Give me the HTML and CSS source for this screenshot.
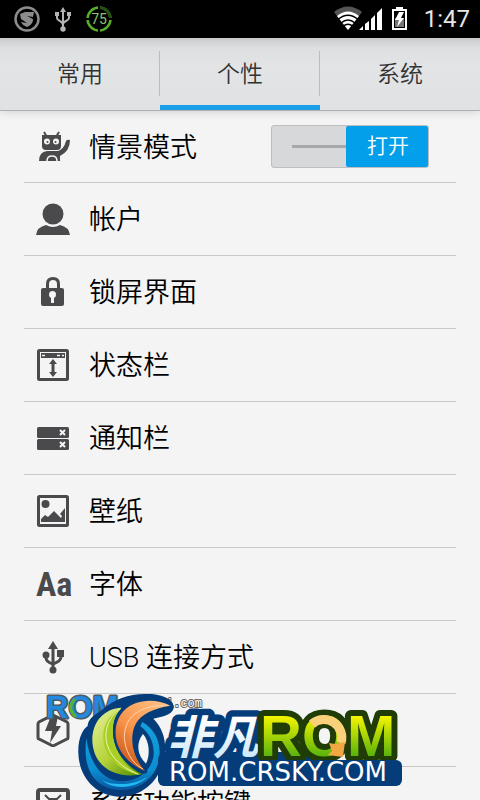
FILE: index.html
```html
<!DOCTYPE html>
<html lang="zh-CN">
<head>
    <meta charset="UTF-8">
    <meta name="viewport" content="width=device-width, initial-scale=1.0">
    <title>个性</title>
    <link rel="stylesheet" href="styles.css">
</head>
<body>
    <div class="app">
        <div class="status-bar">
            <div class="status-left">
                <svg width="26" height="26" viewBox="0 0 26 26">
                    <circle cx="13" cy="13" r="11.5" fill="none" stroke="#8c8c8c" stroke-width="2.5"/>
                    <path d="M6 8l5-2h9l-1 5-6-1 6 3c0 4-2 6-6 8-3-1-5-3-6-5l6 1-6-4z" fill="#8c8c8c"/>
                </svg>
                <svg width="16" height="26" viewBox="0 0 16 26" fill="none" stroke="#b4b4b4" stroke-width="2">
                    <path d="M8 4v18M2 8v4c0 3 6 3 6 7M14 8v4c0 3-6 3-6 6"/>
                    <path d="M5 6l3-5 3 5zM0 6h4v4H0zM12 6h4v4h-4z" fill="#b4b4b4" stroke="none"/>
                    <circle cx="8" cy="23" r="2.7" fill="#b4b4b4" stroke="none"/>
                </svg>
                <svg width="26" height="26" viewBox="0 0 26 26">
                    <circle cx="13" cy="13" r="11.5" fill="none" stroke="#58ad2b" stroke-width="2.5"/>
                    <path d="M13 1.500A11.500 11.500 0 0 1 24.500 13" fill="none" stroke="#254d17" stroke-width="2.500"/>
                    <path d="M13 0v3M13 23v3M0 13h3M23 13h3" stroke="#000" stroke-width="2"/>
                    <text x="13" y="18" class="gauge">75</text>
                </svg>
            </div>
            <div class="status-right">
                <svg width="76" height="26" viewBox="0 0 76 26">
                    <path d="M14 24L0 6Q14-5 28 6z" fill="#555"/>
                    <path d="M14 24L3 10Q14 1 25 10z" fill="#fff"/>
                    <path d="M4 13.500Q14 5 24 13.500M7 17Q14 11 21 17M9 20.500Q14 16 19 20.500" fill="none" stroke="#000" stroke-width="1.500"/>
                    <path d="M25 24h4v-4l-4 4zM31 18l4-3v9h-4zM37 13l4-4v15h-4zM43 7l5-5v22h-5z" fill="#fff"/>
                    <path d="M58 3h4V1h7v2h4v21H58z" fill="#fff"/>
                    <path d="M60 5h11v17H60z" fill="#000"/>
                    <path d="M61 12h9v9h-9z" fill="#777"/>
                    <path d="M65 6h5l-3 6h3l-7 9 2-7h-4z" fill="#fff"/>
                </svg>
                <time class="clock">1:47</time>
            </div>
        </div>

        <nav class="tabs">
            <a href="#common" class="tab">常用</a>
            <a href="#personal" class="tab active">个性</a>
            <a href="#system" class="tab">系统</a>
        </nav>

        <ul class="settings">
            <li class="row">
                <svg class="icon" viewBox="0 0 34 34">
                    <path d="M8 2l3 5M23 2l-3 5" stroke="#4a4a4c" stroke-width="2"/>
                    <path d="M6 5h19v11q0 4-4 4H10q-4 0-4-4z"/>
                    <circle cx="11" cy="11.500" r="3" class="cut"/>
                    <circle cx="20" cy="11.500" r="3" class="cut"/>
                    <circle cx="11.500" cy="12" r="1"/>
                    <circle cx="19.500" cy="12" r="1"/>
                    <path d="M3 31q0-9 8-10h11q6-2 8-10 1-2 4-1 0 11-10 16v5z"/>
                    <path d="M11 31q0-5 5-5t5 5" fill="none" stroke="#f4f4f4" stroke-width="1.500"/>
                </svg>
                <label class="name" for="scene">情景模式</label>
                <label class="switch">
                    <input type="checkbox" id="scene" checked>
                    <span class="thumb">打开</span>
                </label>
            </li>
            <li class="row">
                <svg class="icon" viewBox="0 0 34 34">
                    <circle cx="17" cy="12" r="10.500"/>
                    <path d="M0 33q1-8 10-10 7 4 14 0 9 2 10 10z"/>
                </svg>
                <a href="#account" class="name">帐户</a>
            </li>
            <li class="row">
                <svg class="icon" viewBox="0 0 34 34">
                    <path d="M11.500 14V9q0-5.500 5.500-5.500T22.500 9v5" fill="none" stroke="#4a4a4c" stroke-width="3"/>
                    <rect x="5" y="13" width="23" height="18" rx="2"/>
                    <circle cx="16.500" cy="19.500" r="3.500" class="cut"/>
                    <path d="M15 20h3v8h-3z" class="cut"/>
                </svg>
                <a href="#lock" class="name">锁屏界面</a>
            </li>
            <li class="row">
                <svg class="icon" viewBox="0 0 34 34">
                    <rect x="2.500" y="2.500" width="29" height="29" rx="1" fill="none" stroke="#4a4a4c" stroke-width="3"/>
                    <path d="M5 5h24v5H5z"/>
                    <path d="M6 7.500h3M21 7.500h3M26 7.500h2" stroke="#f4f4f4" stroke-width="1.500"/>
                    <path d="M17 11l4 5h-2.500v8H21l-4 5-4-5h2.500v-8H13z"/>
                </svg>
                <a href="#statusbar" class="name">状态栏</a>
            </li>
            <li class="row">
                <svg class="icon" viewBox="0 0 34 34">
                    <rect x="1" y="6" width="32" height="11" rx="1.500"/>
                    <rect x="1" y="18" width="32" height="11" rx="1.500"/>
                    <path d="M24 9l5 5m0-5l-5 5M24 21l5 5m0-5l-5 5" stroke="#f4f4f4" stroke-width="2"/>
                </svg>
                <a href="#notify" class="name">通知栏</a>
            </li>
            <li class="row">
                <svg class="icon" viewBox="0 0 34 34">
                    <rect x="2.500" y="2.500" width="29" height="29" rx="1" fill="none" stroke="#4a4a4c" stroke-width="3"/>
                    <circle cx="9.500" cy="10" r="4"/>
                    <path d="M5 28v-3l4-4 3 2 6-6 7 7 1-2-2-2 5-6v14z"/>
                </svg>
                <a href="#wallpaper" class="name">壁纸</a>
            </li>
            <li class="row">
                <span class="icon icon-font">Aa</span>
                <a href="#font" class="name">字体</a>
            </li>
            <li class="row">
                <svg class="icon" viewBox="0 0 34 34">
                    <path d="M17 6v22M10 16v2q0 4 7 6M25 14v3q0 4-8 7" fill="none" stroke="#4a4a4c" stroke-width="3"/>
                    <path d="M12 9l5-8 5 8zM21 10h7v7h-7z"/>
                    <circle cx="10" cy="15" r="3.500"/>
                    <circle cx="17" cy="30" r="3.500"/>
                </svg>
                <a href="#usb" class="name">USB 连接方式</a>
            </li>
            <li class="row">
                <svg class="icon" viewBox="0 0 34 34">
                    <path d="M17 2l14 7q1 1 1 2v13q0 2-1 2l-14 7-14-7q-1 0-1-2V11q0-1 1-2z" fill="none" stroke="#4a4a4c" stroke-width="3"/>
                    <path d="M15 3h7l-2 10h5L14 30l2-12H9z"/>
                </svg>
                <a href="#performance" class="name">性能</a>
            </li>
            <li class="row">
                <svg class="icon" viewBox="0 0 34 34">
                    <rect x="2" y="4" width="30" height="27" rx="2" fill="none" stroke="#4a4a4c" stroke-width="4"/>
                    <path d="M9 9l4 4h8l4-4" fill="none" stroke="#4a4a4c" stroke-width="2"/>
                </svg>
                <a href="#keys" class="name">系统功能按键</a>
            </li>
        </ul>

        <!-- site logo over the list -->
        <svg class="watermark" width="370" height="112" viewBox="40 688 370 112">
            <defs>
                <linearGradient id="lime" x1="0" y1="0" x2="0" y2="1">
                    <stop offset="0.2" stop-color="#f5f500"/>
                    <stop offset="0.8" stop-color="#5db40c"/>
                </linearGradient>
                <linearGradient id="ice" x1="0" y1="0" x2="0" y2="1">
                    <stop offset="0.3" stop-color="#fff"/>
                    <stop offset="1" stop-color="#bfe2f8"/>
                </linearGradient>
                <linearGradient id="orange" x1="1" y1="0" x2="0.4" y2="1">
                    <stop offset="0" stop-color="#ffc58a"/>
                    <stop offset="0.6" stop-color="#f7934a"/>
                    <stop offset="1" stop-color="#cf5a1c"/>
                </linearGradient>
                <linearGradient id="green" x1="0" y1="0" x2="0.8" y2="1">
                    <stop offset="0" stop-color="#e8f2a0"/>
                    <stop offset="0.6" stop-color="#b4d238"/>
                    <stop offset="1" stop-color="#5e9608"/>
                </linearGradient>
                <linearGradient id="cyan" x1="0" y1="0" x2="0" y2="1">
                    <stop offset="0" stop-color="#14a0dc"/>
                    <stop offset="0.7" stop-color="#0a8fd0"/>
                    <stop offset="1" stop-color="#0a55a0"/>
                </linearGradient>
            </defs>

            <text x="46" y="718" class="rom-small">ROM</text>
            <path d="M75 699q-9 9 1 18" fill="none" stroke="#54b52c" stroke-width="3"/>
            <text x="202" y="707" class="dot-com">i.com</text>

            <g transform="translate(75 690) scale(0.3333)">
                <path d="M78 62C120 25 165 10 220 12 270 13 300 32 296 55 290 78 258 80 235 86 270 120 280 175 262 225 245 280 195 322 130 320 60 316 12 260 10 190 8 145 25 115 38 108 38 90 55 75 78 62z" fill="#053d7b"/>
                <path d="M34 145C20 250 70 303 145 300 210 296 255 245 254 185 253 145 235 115 202 96L196 108C225 130 238 160 236 195 230 240 195 270 145 274 85 275 45 225 34 145z" fill="url(#cyan)"/>
                <path d="M80 270C115 300 180 298 218 260 185 282 120 292 80 270z" fill="#22baf0"/>
                <path d="M140 53C90 55 52 92 52 150 53 220 108 270 203 253 140 222 105 165 115 100 119 80 128 66 140 53z" fill="url(#green)"/>
                <path d="M136 57C95 80 80 115 86 155 92 203 135 245 192 253 135 220 105 165 115 100 119 80 126 68 136 57z" fill="#a9cf24"/>
                <path d="M136 57C72 100 70 205 190 253" fill="none" stroke="#edf3b4" stroke-width="3"/>
                <path d="M286 47C240 24 180 27 145 64 105 110 110 200 210 243 175 205 160 145 182 102 198 72 238 54 286 47z" fill="url(#orange)" stroke="#053d7b" stroke-width="14" stroke-linejoin="round" paint-order="stroke"/>
                <path d="M280 46C200 45 150 74 148 140 149 180 170 220 204 237" fill="none" stroke="#ffd3a5" stroke-width="3"/>
                <path d="M204 132C182 160 186 195 213 221 226 195 224 155 204 132z" fill="#f4f4f4"/>
            </g>

            <rect x="158" y="752" width="160" height="34" rx="8" fill="#053d7b"/>
            <text x="167" y="754" class="feifan">非凡</text>
            <text x="260" y="756" class="rom-big">ROM</text>
            <path d="M312 724A18 18 0 0 1 341 743" fill="none" stroke="#fbd07a" stroke-width="9"/>
            <path d="M345 742l-2 15-15-2 4-4-3-8 6 1z" fill="#f2a842"/>
            <rect x="158" y="760" width="244" height="26" rx="6" fill="#053d7b"/>
            <text x="169" y="781" class="site">ROM.CRSKY.COM</text>
        </svg>
    </div>
</body>
</html>
```

FILE: styles.css
```css
* {
    box-sizing: border-box;
}

body {
    margin: 0;
    background: #f4f4f4;
    color: #000;
    font-family: Roboto, "Noto Sans CJK SC", sans-serif;
}

a {
    color: inherit;
    text-decoration: none;
}

.app {
    position: relative;
    display: flex;
    flex-direction: column;
    height: 100vh;
    overflow: hidden;
}

/* status bar */
.status-bar {
    flex: none;
    display: flex;
    justify-content: space-between;
    align-items: center;
    height: 38px;
    padding: 0 10px 0 14px;
    background: #000;
}

.status-left,
.status-right {
    display: flex;
    align-items: center;
}

.status-left {
    gap: 15px;
}

.status-right {
    gap: 14px;
}

.gauge {
    fill: #8cc46c;
    font-size: 14px;
    text-anchor: middle;
}

.clock {
    color: #e6e6e6;
    font-size: 24px;
    line-height: 38px;
}

/* tabs */
.tabs {
    flex: none;
    display: flex;
    height: 73px;
    border-bottom: 1px solid #b0b0b1;
    background: linear-gradient(#c9cacc, #dedfe1 10px, #e3e4e6 30px, #e0e1e3);
    box-shadow: 0 2px 8px rgba(0, 0, 0, 0.12);
}

.tab {
    position: relative;
    flex: 1;
    color: #333;
    font-size: 23px;
    font-weight: 350;
    line-height: 73px;
    height: 72px;
    text-align: center;
    border-bottom: 5px solid transparent;
}

.tab.active {
    border-bottom-color: #1b9fe8;
}

.tab:not(:last-child)::after {
    content: "";
    position: absolute;
    top: 13px;
    right: 0;
    width: 1px;
    height: 45px;
    background: #bcbdbf;
}

/* list */
.settings {
    flex: 1;
    min-height: 0;
    overflow-y: auto;
    scrollbar-width: none;
    margin: 0;
    padding: 0 24px;
    list-style: none;
}

.row {
    display: flex;
    align-items: center;
    height: 73px;
    padding: 0 27px 0 12px;
    border-bottom: 1px solid #c8c8c8;
}

.row:first-child {
    height: 72px;
}

.icon {
    flex: none;
    width: 34px;
    height: 34px;
    margin-right: 19px;
    fill: #4a4a4c;
}

.icon .cut {
    fill: #f4f4f4;
}

.icon-font {
    color: #4a4a4c;
    font: bold 34px/34px "Liberation Sans Narrow", "Roboto Condensed", Roboto, sans-serif;
}

.name {
    flex: 1;
    padding-top: 2px;
    font-size: 27px;
    font-weight: 350;
    line-height: 36px;
    white-space: nowrap;
}

.switch {
    position: relative;
    display: flex;
    align-items: center;
    justify-content: flex-end;
    width: 158px;
    height: 43px;
    border: 1px solid #bdbebf;
    border-radius: 3px;
    background: #d7d8da;
    cursor: pointer;
}

.switch::before {
    content: "";
    flex: 1;
    height: 3px;
    margin-left: 20px;
    background: #a7a8aa;
}

.switch input {
    position: absolute;
    opacity: 0;
}

.thumb {
    width: 82px;
    padding-left: 2px;
    border-radius: 2px;
    background: #039fea;
    color: #fff;
    font-size: 21px;
    font-weight: 350;
    line-height: 41px;
    text-align: center;
}

/* logo */
.watermark {
    position: absolute;
    left: 40px;
    bottom: 0;
    pointer-events: none;
}

.watermark text {
    paint-order: stroke;
    stroke-linejoin: round;
}

.rom-small {
    fill: #2388df;
    stroke: #505a64;
    stroke-width: 3px;
    font: bold 31px "Liberation Sans", sans-serif;
}

.dot-com {
    fill: #fff;
    stroke: #666;
    stroke-width: 2px;
    font: 12px "Liberation Mono", monospace;
    text-anchor: end;
}

.feifan {
    fill: url(#ice);
    stroke: #053d7b;
    stroke-width: 13px;
    font: italic bold 46px "Noto Sans CJK SC", sans-serif;
}

.rom-big {
    fill: url(#lime);
    stroke: #203c07;
    stroke-width: 12px;
    font: bold 58px "Liberation Sans", sans-serif;
}

.site {
    fill: #fff;
    font: 26px "DejaVu Sans", sans-serif;
}
```
